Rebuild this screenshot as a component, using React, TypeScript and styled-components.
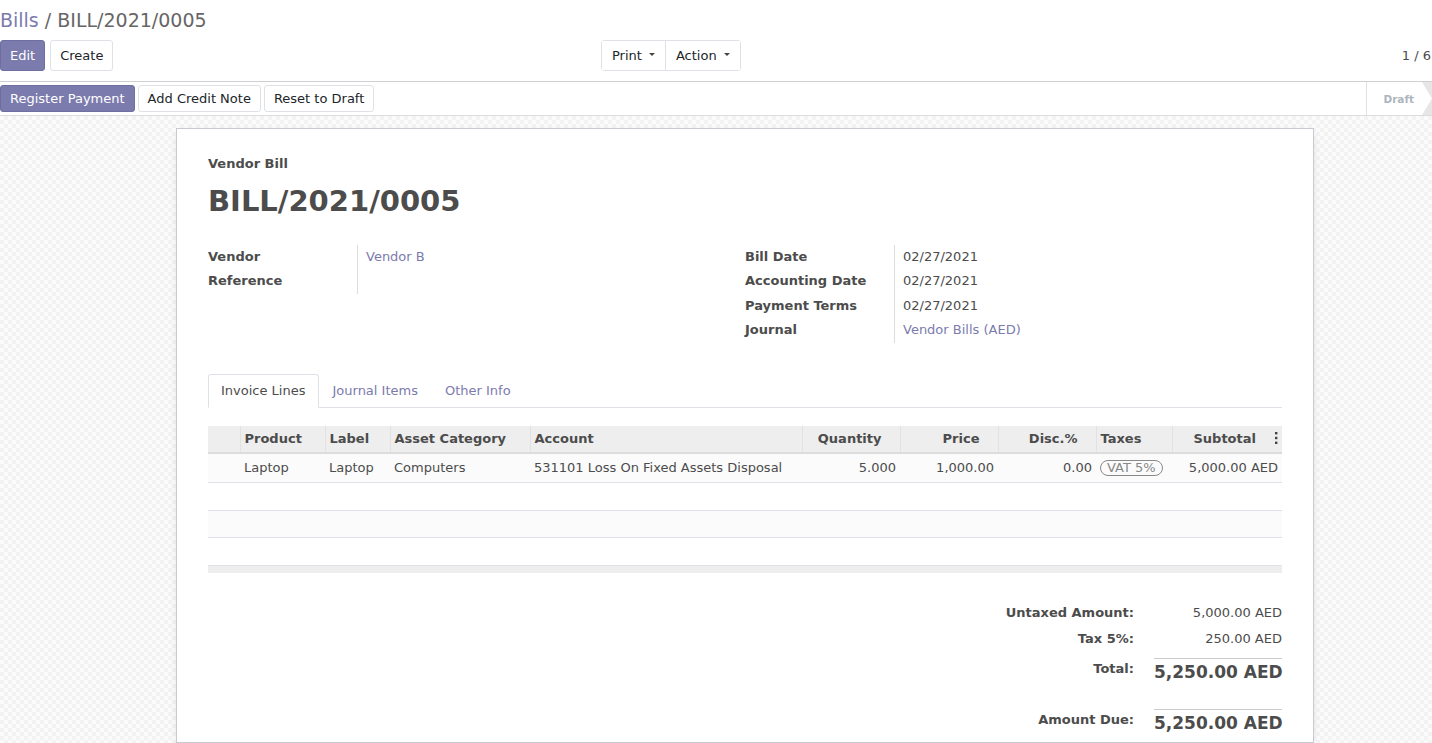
import React from "react";
import styled, { createGlobalStyle } from "styled-components";

const GlobalStyle = createGlobalStyle`
  html, body {
    margin: 0;
    padding: 0;
    height: 100%;
    overflow: hidden;
  }
  body {
    font-family: "DejaVu Sans", "Liberation Sans", sans-serif;
    font-size: 13px;
    color: #4c4c4c;
    background: #fff;
  }
  #root {
    height: 100%;
  }
`;

const Page = styled.div`
  display: flex;
  flex-direction: column;
  height: 100%;
`;

const ControlPanel = styled.div`
  display: flex;
  flex-direction: column;
  padding-bottom: 10px;
`;

const Breadcrumb = styled.div`
  height: 40px;
  line-height: 40px;
  font-size: 19px;
  color: #666;
  white-space: nowrap;
`;

const Crumb = styled.span`
  color: #7c7bad;
`;

const CpBottom = styled.div`
  display: grid;
  grid-template-columns: 601px auto 1fr;
  align-items: center;
  height: 31px;
`;

const ButtonRow = styled.div<{ $gap?: number }>`
  display: flex;
  gap: ${(p) => p.$gap ?? 5}px;
  align-items: center;
`;

const Button = styled.button<{ $primary?: boolean; $h?: number }>`
  height: ${(p) => p.$h ?? 31}px;
  padding: 0 9px;
  font-family: inherit;
  font-size: 13px;
  border-radius: 3px;
  border: 1px solid ${(p) => (p.$primary ? "#6f6ea0" : "#dee2e6")};
  background: ${(p) => (p.$primary ? "#7c7bad" : "#fff")};
  color: ${(p) => (p.$primary ? "#fff" : "#212529")};
  cursor: pointer;
  white-space: nowrap;
`;

const BtnGroup = styled.div`
  display: flex;
  height: 31px;
  border: 1px solid #dee2e6;
  border-radius: 3px;
  box-sizing: border-box;
`;

const GroupButton = styled.button`
  display: flex;
  align-items: center;
  gap: 7px;
  padding: 0 10px;
  font-family: inherit;
  font-size: 13px;
  color: #212529;
  background: #fff;
  border: none;
  border-left: 1px solid #dee2e6;
  &:first-child {
    border-left: none;
  }
`;

const Caret = styled.span`
  width: 0;
  height: 0;
  border-left: 3px solid transparent;
  border-right: 3px solid transparent;
  border-top: 3px solid #444;
  margin-top: -2px;
`;

const Pager = styled.div`
  justify-self: end;
  margin-right: 1px;
  white-space: nowrap;
`;

const StatusBar = styled.div`
  display: flex;
  align-items: center;
  height: 33px;
  border-top: 1px solid #cfcfcf;
  border-bottom: 1px solid #dcdcdc;
  box-sizing: content-box;
`;

const StatusState = styled.div`
  margin-left: auto;
  align-self: stretch;
  display: flex;
  align-items: center;
  gap: 8px;
  padding-left: 16px;
  border-left: 1px solid #dee2e6;
  font-size: 10.5px;
  font-weight: bold;
  color: #adb5bd;
  margin-right: -2px;
`;

const Content = styled.div`
  flex: 1;
  padding-top: 12px;
  background-color: #fbfbfb;
  background-image: conic-gradient(
    #f3f3f3 25%,
    transparent 0 50%,
    #f3f3f3 0 75%,
    transparent 0
  );
  background-size: 8px 8px;
  overflow: hidden;
`;

const Sheet = styled.div`
  margin-left: 176px;
  width: 1138px;
  min-height: 100%;
  box-sizing: border-box;
  background: #fff;
  border: 1px solid #c8c9d2;
  box-shadow: 0 3px 10px -4px rgba(0, 0, 0, 0.2);
  padding: 26px 31px 0;
`;

const DocType = styled.div`
  font-weight: bold;
  line-height: 18px;
`;

const Title = styled.h1`
  margin: 11px 0 0;
  font-size: 29px;
  line-height: 34px;
  font-weight: bold;
  color: #4c4c4c;
`;

const Groups = styled.div`
  display: grid;
  grid-template-columns: 1fr 1fr;
  margin-top: 27px;
`;

const FieldGroup = styled.div`
  display: grid;
  grid-template-columns: 149px 1fr;
  align-content: start;
`;

const FieldLabel = styled.div`
  font-weight: bold;
  line-height: 24.4px;
`;

const FieldValue = styled.div<{ $link?: boolean }>`
  line-height: 24.4px;
  padding-left: 8px;
  border-left: 1px solid #ddd;
  color: ${(p) => (p.$link ? "#7c7bad" : "#4c4c4c")};
`;

const Tabs = styled.div`
  display: flex;
  margin-top: 31px;
  border-bottom: 1px solid #dee2e6;
`;

const Tab = styled.div<{ $active?: boolean }>`
  height: 32px;
  line-height: 32px;
  padding: 0 13px 0 12px;
  margin-bottom: -1px;
  border: 1px solid ${(p) => (p.$active ? "#dee2e6" : "transparent")};
  border-bottom-color: ${(p) => (p.$active ? "#fff" : "transparent")};
  border-radius: 3px 3px 0 0;
  background: ${(p) => (p.$active ? "#fff" : "transparent")};
  color: ${(p) => (p.$active ? "#4c4c4c" : "#7c7bad")};
`;

const LinesTable = styled.table`
  width: 100%;
  margin-top: 18px;
  border-collapse: collapse;
  table-layout: fixed;
`;

const HeadCell = styled.th<{ $w?: number; $right?: boolean; $pr?: number }>`
  box-sizing: border-box;
  width: ${(p) => (p.$w ? `${p.$w}px` : "auto")};
  height: 27px;
  padding: 0 ${(p) => p.$pr ?? 4}px 0 4px;
  background: #eee;
  border-left: 1px solid #e2e2e2;
  border-bottom: 2px solid #dcdcdc;
  text-align: ${(p) => (p.$right ? "right" : "left")};
  font-weight: bold;
  white-space: nowrap;
  &:first-child {
    border-left: none;
  }
`;

const Row = styled.tr<{ $striped?: boolean }>`
  background: ${(p) => (p.$striped ? "#fbfbfb" : "#fff")};
`;

const Cell = styled.td<{ $right?: boolean; $h?: number }>`
  box-sizing: border-box;
  height: ${(p) => p.$h ?? 30}px;
  padding: 0 4px;
  border-bottom: 1px solid #dee2e6;
  text-align: ${(p) => (p.$right ? "right" : "left")};
  white-space: nowrap;
  overflow: hidden;
`;

const FootCell = styled.td`
  height: 7px;
  padding: 0;
  background: #eee;
  border-top: 1px solid #ddd;
`;

const TaxBadge = styled.span`
  display: inline-block;
  line-height: 14px;
  padding: 0 6px;
  border: 1.5px solid #8a8a8a;
  border-radius: 10px;
  color: #888;
`;

const Kebab = styled.svg`
  margin-left: 18px;
  vertical-align: -1px;
`;

const Totals = styled.div`
  display: grid;
  grid-template-columns: auto 128px;
  column-gap: 20px;
  justify-content: end;
  margin-top: 27px;
`;

const TotalLabel = styled.div<{ $big?: boolean; $mt?: number }>`
  font-weight: bold;
  text-align: right;
  line-height: ${(p) => (p.$big ? 20 : 26)}px;
  margin-top: ${(p) => p.$mt ?? 0}px;
  padding-top: ${(p) => (p.$big ? 1 : 0)}px;
`;

const TotalValue = styled.div<{ $big?: boolean; $mt?: number }>`
  text-align: right;
  white-space: nowrap;
  line-height: 26px;
  margin-top: ${(p) => p.$mt ?? 0}px;
  font-size: ${(p) => (p.$big ? 17 : 13)}px;
  font-weight: ${(p) => (p.$big ? "bold" : "normal")};
  border-top: ${(p) => (p.$big ? "1px solid #ccc" : "none")};
`;

const columns = [
  { label: "", w: 32 },
  { label: "Product", w: 85 },
  { label: "Label", w: 65 },
  { label: "Asset Category", w: 140 },
  { label: "Account", w: 272 },
  { label: "Quantity", w: 98, right: true, pr: 18 },
  { label: "Price", w: 98, right: true, pr: 18 },
  { label: "Disc.%", w: 98, right: true, pr: 18 },
  { label: "Taxes", w: 76 },
];

const emptyRows = [
  { striped: false, h: 28 },
  { striped: true, h: 27 },
  { striped: false, h: 28 },
];

const App = () => {
  return (
    <Page>
      <GlobalStyle />
      <ControlPanel>
        <Breadcrumb>
          <Crumb>Bills</Crumb> / BILL/2021/0005
        </Breadcrumb>
        <CpBottom>
          <ButtonRow>
            <Button $primary>Edit</Button>
            <Button>Create</Button>
          </ButtonRow>
          <BtnGroup>
            <GroupButton>
              Print <Caret />
            </GroupButton>
            <GroupButton>
              Action <Caret />
            </GroupButton>
          </BtnGroup>
          <Pager>1 / 6</Pager>
        </CpBottom>
      </ControlPanel>

      <StatusBar>
        <ButtonRow $gap={3}>
          <Button $primary $h={27}>
            Register Payment
          </Button>
          <Button $h={27}>Add Credit Note</Button>
          <Button $h={27}>Reset to Draft</Button>
        </ButtonRow>
        <StatusState>
          Draft
          <svg width="12" height="33" viewBox="0 0 12 33">
            <polygon points="0,0 12,0 12,33 0,33 10,16.5" fill="#e6e6e6" />
          </svg>
        </StatusState>
      </StatusBar>

      <Content>
        <Sheet>
          <DocType>Vendor Bill</DocType>
          <Title>BILL/2021/0005</Title>

          <Groups>
            <FieldGroup>
              <FieldLabel>Vendor</FieldLabel>
              <FieldValue $link>Vendor B</FieldValue>
              <FieldLabel>Reference</FieldLabel>
              <FieldValue />
            </FieldGroup>
            <FieldGroup>
              <FieldLabel>Bill Date</FieldLabel>
              <FieldValue>02/27/2021</FieldValue>
              <FieldLabel>Accounting Date</FieldLabel>
              <FieldValue>02/27/2021</FieldValue>
              <FieldLabel>Payment Terms</FieldLabel>
              <FieldValue>02/27/2021</FieldValue>
              <FieldLabel>Journal</FieldLabel>
              <FieldValue $link>Vendor Bills (AED)</FieldValue>
            </FieldGroup>
          </Groups>

          <Tabs>
            <Tab $active>Invoice Lines</Tab>
            <Tab>Journal Items</Tab>
            <Tab>Other Info</Tab>
          </Tabs>

          <LinesTable>
            <thead>
              <tr>
                {columns.map((c, i) => (
                  <HeadCell key={i} $w={c.w} $right={c.right} $pr={c.pr}>
                    {c.label}
                  </HeadCell>
                ))}
                <HeadCell $right>
                  Subtotal
                  <Kebab width="4" height="12" viewBox="0 0 4 12">
                    <rect x="1" y="0" width="2.4" height="2.4" fill="#444" />
                    <rect x="1" y="4.8" width="2.4" height="2.4" fill="#444" />
                    <rect x="1" y="9.6" width="2.4" height="2.4" fill="#444" />
                  </Kebab>
                </HeadCell>
              </tr>
            </thead>
            <tbody>
              <Row $striped>
                <Cell />
                <Cell>Laptop</Cell>
                <Cell>Laptop</Cell>
                <Cell>Computers</Cell>
                <Cell>531101 Loss On Fixed Assets Disposal</Cell>
                <Cell $right>5.000</Cell>
                <Cell $right>1,000.00</Cell>
                <Cell $right>0.00</Cell>
                <Cell>
                  <TaxBadge>VAT 5%</TaxBadge>
                </Cell>
                <Cell $right>5,000.00 AED</Cell>
              </Row>
              {emptyRows.map((r, i) => (
                <Row key={i} $striped={r.striped}>
                  <Cell $h={r.h} colSpan={10} />
                </Row>
              ))}
            </tbody>
            <tfoot>
              <tr>
                <FootCell colSpan={10} />
              </tr>
            </tfoot>
          </LinesTable>

          <Totals>
            <TotalLabel>Untaxed Amount:</TotalLabel>
            <TotalValue>5,000.00 AED</TotalValue>
            <TotalLabel>Tax 5%:</TotalLabel>
            <TotalValue>250.00 AED</TotalValue>
            <TotalLabel $big $mt={6}>
              Total:
            </TotalLabel>
            <TotalValue $big $mt={6}>
              5,250.00 AED
            </TotalValue>
            <TotalLabel $big $mt={24}>
              Amount Due:
            </TotalLabel>
            <TotalValue $big $mt={24}>
              5,250.00 AED
            </TotalValue>
          </Totals>
        </Sheet>
      </Content>
    </Page>
  );
};

export default App;
